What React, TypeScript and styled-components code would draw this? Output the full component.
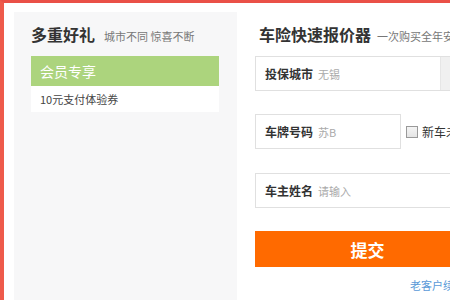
import React from "react";
import styled, { createGlobalStyle } from "styled-components";

const Global = createGlobalStyle`
  html, body { margin: 0; padding: 0; background: #fff; }
  body { font-family: "Noto Sans CJK SC", "Noto Sans", sans-serif; overflow: hidden; }
`;

const Frame = styled.div`
  width: 450px;
  height: 300px;
  box-sizing: border-box;
  border-left: 4px solid #ee5a4b;
  border-top: 3px solid #ea5047;
  background: #fff;
  padding: 9px 0 0 10px;
  display: flex;
  overflow: hidden;
  position: relative;
`;

const Glow = styled.div`
  position: absolute;
  left: -4px;
  top: 155px;
  width: 4px;
  height: 28px;
  background: linear-gradient(180deg, rgba(255,170,40,0) 0%, #f7a23a 50%, rgba(255,170,40,0) 100%);
`;

const LeftPanel = styled.div`
  width: 223px;
  flex: none;
  background: #f7f7f8;
  padding: 12px 17px 0 17px;
  box-sizing: border-box;
`;

const HeadRow = styled.div`
  display: flex;
  align-items: baseline;
  gap: 9px;
  height: 20px;
  line-height: 20px;
`;

const LeftTitle = styled.span`
  font-size: 16px;
  font-weight: 700;
  color: #333;
`;

const SubTitle = styled.span`
  font-size: 11px;
  color: #777;
  white-space: nowrap;
`;

const Card = styled.div`
  margin-top: 12px;
  width: 188px;
`;

const CardHead = styled.div`
  height: 30px;
  background: #acd47d;
  color: #fff;
  font-size: 14px;
  line-height: 30px;
  padding-left: 9px;
`;

const CardBody = styled.div`
  height: 26px;
  background: #fff;
  color: #444;
  font-size: 11px;
  line-height: 26px;
  padding-left: 9px;
`;

const RightPanel = styled.div`
  flex: none;
  width: 260px;
  padding: 12px 0 0 18px;
  box-sizing: border-box;
`;

const RightHead = styled.div`
  display: flex;
  align-items: baseline;
  gap: 6px;
  height: 20px;
  line-height: 20px;
  padding-left: 4px;
  white-space: nowrap;
`;

const RightTitle = styled.span`
  font-size: 16px;
  font-weight: 700;
  color: #333;
`;

const Field = styled.div<{ $w: number; $mt: number }>`
  margin-top: ${(p) => p.$mt}px;
  width: ${(p) => p.$w}px;
  height: 35px;
  box-sizing: border-box;
  border: 1px solid #e0e0e0;
  background: #fff;
  display: flex;
  align-items: center;
  padding-left: 9px;
  gap: 5px;
  flex: none;
`;

const Label = styled.span`
  font-size: 12px;
  font-weight: 700;
  color: #333;
  white-space: nowrap;
`;

const Value = styled.span`
  font-size: 11px;
  color: #aaa;
  white-space: nowrap;
  flex: 1;
`;

const SelectBtn = styled.div`
  width: 38px;
  align-self: stretch;
  background: #f0f0f0;
  border-left: 1px solid #e6e6e6;
`;

const Row = styled.div`
  display: flex;
  align-items: center;
  margin-top: 23px;
  gap: 5px;
`;

const Check = styled.label`
  display: flex;
  align-items: center;
  gap: 4px;
  font-size: 12px;
  color: #333;
  white-space: nowrap;
`;

const Box = styled.span`
  width: 10px;
  height: 10px;
  border: 1px solid #999;
  background: linear-gradient(#f4f4f4, #e4e4e4);
  display: inline-block;
`;

const Submit = styled.button`
  margin-top: 23px;
  width: 225px;
  height: 36px;
  border: none;
  background: #ff6a00;
  color: #fff;
  font-family: inherit;
  font-size: 17px;
  font-weight: 700;
  padding: 0;
  display: block;
`;

const Link = styled.a`
  display: block;
  margin: 10px 0 0 155px;
  font-size: 11px;
  color: #5a9ad8;
  text-decoration: none;
  white-space: nowrap;
`;

export default function App() {
  return (
    <>
      <Global />
      <Frame>
        <Glow />
        <LeftPanel>
          <HeadRow>
            <LeftTitle>多重好礼</LeftTitle>
            <SubTitle>城市不同 惊喜不断</SubTitle>
          </HeadRow>
          <Card>
            <CardHead>会员专享</CardHead>
            <CardBody>10元支付体验券</CardBody>
          </Card>
        </LeftPanel>
        <RightPanel>
          <RightHead>
            <RightTitle>车险快速报价器</RightTitle>
            <SubTitle>一次购买全年安心</SubTitle>
          </RightHead>
          <Field $w={225} $mt={12}>
            <Label>投保城市</Label>
            <Value>无锡</Value>
            <SelectBtn />
          </Field>
          <Row>
            <Field $w={146} $mt={0}>
              <Label>车牌号码</Label>
              <Value>苏B</Value>
            </Field>
            <Check>
              <Box />
              新车未上牌
            </Check>
          </Row>
          <Field $w={225} $mt={24}>
            <Label>车主姓名</Label>
            <Value>请输入</Value>
          </Field>
          <Submit>提交</Submit>
          <Link>老客户续保</Link>
        </RightPanel>
      </Frame>
    </>
  );
}
